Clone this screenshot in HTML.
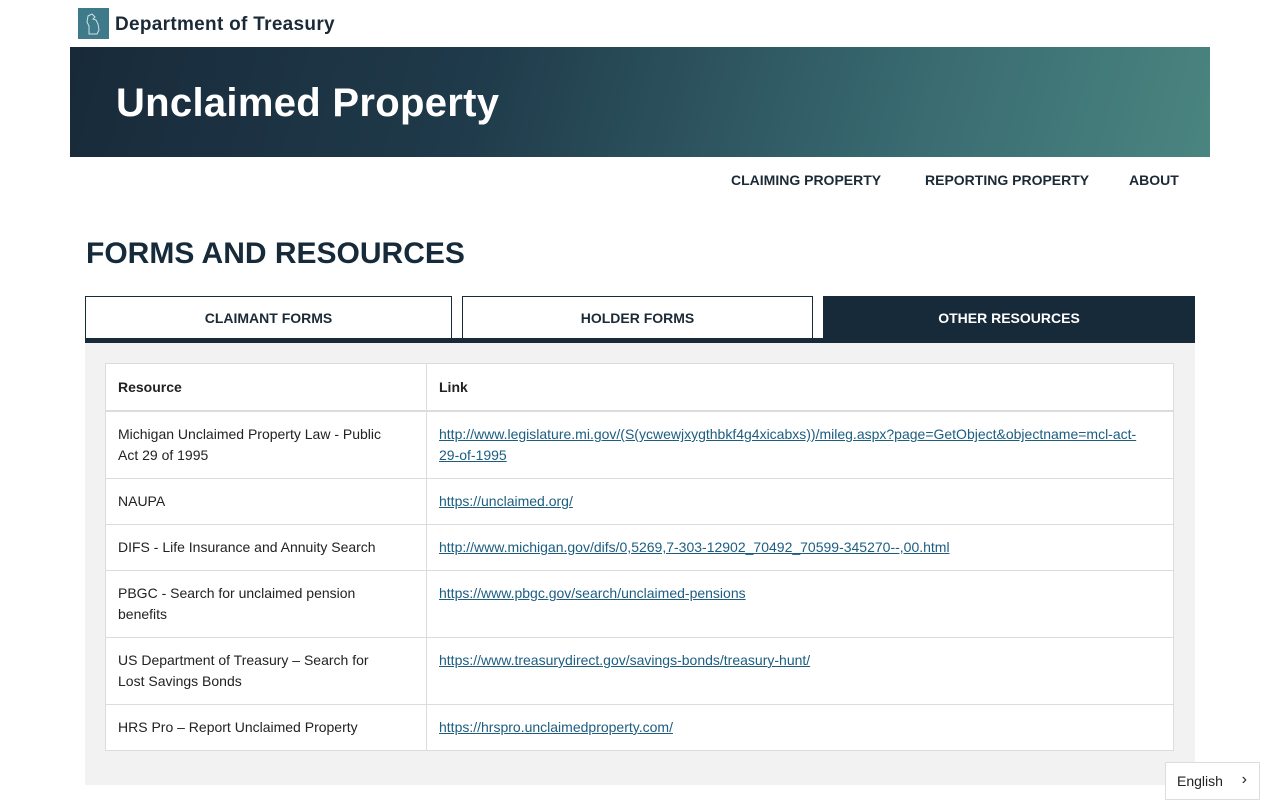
<!DOCTYPE html>
<html><head><meta charset="utf-8"><style>
*{box-sizing:border-box;margin:0;padding:0}
body{width:1280px;height:800px;overflow:hidden;background:#fff;font-family:"Liberation Sans",sans-serif;color:#1b2a36;position:relative}
.abs{position:absolute}
.logo{left:78px;top:8px;width:31px;height:31px;background:#3f7a8a}
.dept{left:115px;top:14px;font-size:19px;font-weight:bold;color:#1b2a36;letter-spacing:0.3px}
.banner{left:70px;top:47px;width:1140px;height:110px;background:linear-gradient(105deg,#182a3a 0%,#1f3a4a 35%,#3a6c72 75%,#4a8580 100%)}
.banner h1{position:absolute;left:46px;top:34px;color:#fff;font-size:40px;font-weight:bold;letter-spacing:0.3px}
.nav{top:172px;font-size:14px;font-weight:bold;color:#1b2a36}
h2{position:absolute;left:86px;top:237px;font-size:30px;font-weight:bold;color:#172a3a}
.tab{top:296px;height:42px;border:1px solid #172a3a;border-bottom:none;font-size:14px;font-weight:bold;text-align:center;line-height:42px;background:#fff}
.bar{left:85px;top:338px;width:1110px;height:5px;background:#172a3a}
.panel{left:85px;top:343px;width:1110px;height:442px;background:#f2f2f2}
table{position:absolute;left:105px;top:363px;width:1069px;border-collapse:collapse;background:#fff;font-size:14px;table-layout:fixed}
td,th{border:1px solid #dcdcdc;padding:12px 12px;vertical-align:top;text-align:left;line-height:21px;color:#222}
td:first-child{padding-right:30px}
td:last-child{padding-right:25px}
th{height:47px;padding-top:13px;border-bottom:2px solid #dcdcdc}
col.a{width:321px}
tr.s td{height:46px}
tr.t td{height:67px}
a{color:#1c5d80;text-decoration:underline}
.lang{left:1165px;top:762px;width:95px;height:38px;border:1px solid #ddd;background:#fff;font-size:14px;padding:10px 11px;color:#222}
</style></head><body>
<div class="abs logo"><svg width="31" height="31" viewBox="0 0 31 31"><path d="M10 8 l4-2 3 3-2 2 3 1 2 4 1 6-2 4-8 0 0-8-2-4z" fill="none" stroke="#cfe3e8" stroke-width="1"/></svg></div>
<div class="abs dept">Department of Treasury</div>
<div class="abs banner"><h1>Unclaimed Property</h1></div>
<div class="abs nav" style="left:731px">CLAIMING PROPERTY</div>
<div class="abs nav" style="left:925px">REPORTING PROPERTY</div>
<div class="abs nav" style="left:1129px">ABOUT</div>
<h2>FORMS AND RESOURCES</h2>
<div class="abs tab" style="left:85px;width:367px">CLAIMANT FORMS</div>
<div class="abs tab" style="left:462px;width:351px">HOLDER FORMS</div>
<div class="abs tab" style="left:823px;width:372px;background:#172a3a;color:#fff">OTHER RESOURCES</div>
<div class="abs bar"></div>
<div class="abs panel"></div>
<table>
<colgroup><col class="a"><col></colgroup>
<tr><th>Resource</th><th>Link</th></tr>
<tr class="t"><td>Michigan Unclaimed Property Law - Public Act 29 of 1995</td><td><a>http://www.legislature.mi.gov/(S(ycwewjxygthbkf4g4xicabxs))/mileg.aspx?page=GetObject&amp;objectname=mcl-act-29-of-1995</a></td></tr>
<tr class="s"><td>NAUPA</td><td><a>https://unclaimed.org/</a></td></tr>
<tr class="s"><td>DIFS - Life Insurance and Annuity Search</td><td><a>http://www.michigan.gov/difs/0,5269,7-303-12902_70492_70599-345270--,00.html</a></td></tr>
<tr class="t"><td>PBGC - Search for unclaimed pension benefits</td><td><a>https://www.pbgc.gov/search/unclaimed-pensions</a></td></tr>
<tr class="t"><td>US Department of Treasury – Search for Lost Savings Bonds</td><td><a>https://www.treasurydirect.gov/savings-bonds/treasury-hunt/</a></td></tr>
<tr class="s"><td>HRS Pro – Report Unclaimed Property</td><td><a>https://hrspro.unclaimedproperty.com/</a></td></tr>
</table>
<div class="abs lang">English <span style="position:absolute;right:12px;top:8px;font-size:16px">›</span></div>
</body></html>
